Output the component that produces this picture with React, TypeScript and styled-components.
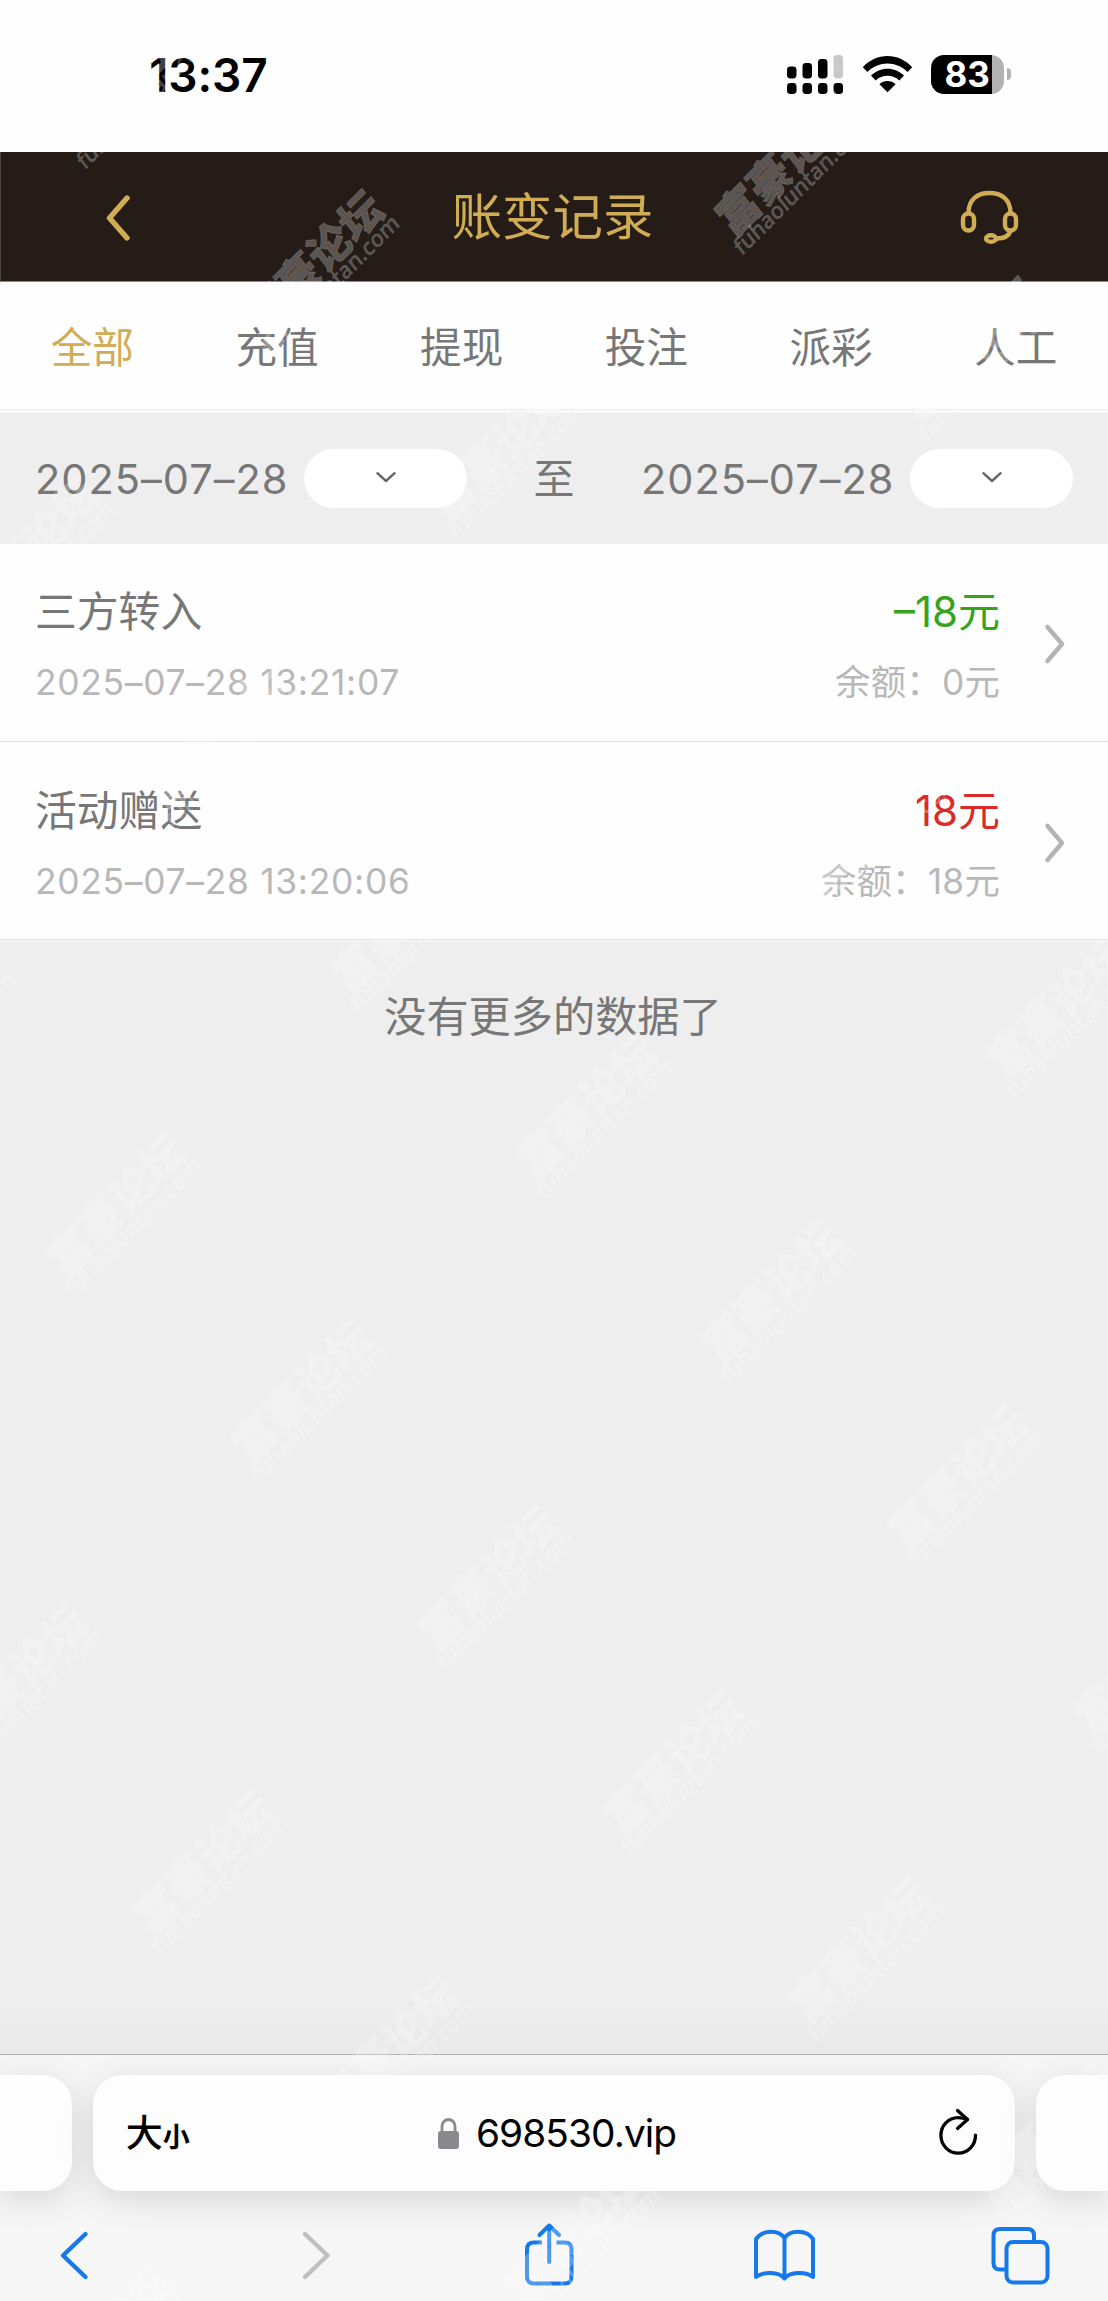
import React from "react";
import styled, { createGlobalStyle } from "styled-components";

const GOLD = "#d0ac55";
const BLUE = "#1579ea";
const GREY = "#777777";

const GlobalStyle = createGlobalStyle`
  html, body { margin: 0; padding: 0; background: #eeeeee; }
  *, *::before, *::after { box-sizing: border-box; }
  body { font-family: Inter, "Noto Sans CJK SC", sans-serif; }
`;

const Screen = styled.div`
  position: relative;
  width: 1108px;
  height: 2301px;
  overflow: hidden;
  display: flex;
  flex-direction: column;
  background: #eeeeee;
  color: ${GREY};
`;

/* ---------- status bar ---------- */
const StatusBar = styled.div`
  height: 152px;
  flex: none;
  display: flex;
  align-items: flex-start;
  justify-content: space-between;
  padding: 48px 97px 0 149px;
  background: #fefefe;
`;
const Clock = styled.div`
  margin-top: -1px;
  font-size: 46px;
  line-height: 56px;
  font-weight: 600;
  letter-spacing: -0.1px;
  color: #000;
`;
const StatusIcons = styled.div`
  display: flex;
  align-items: flex-start;
  padding-top: 7px;
`;
const SignalSvg = styled.svg`
  width: 57px;
  height: 40px;
  margin-right: 18px;
`;
const WifiSvg = styled.svg`
  width: 51px;
  height: 38px;
  margin-right: 18px;
`;
const Battery = styled.div`
  width: 73px;
  height: 39px;
  border-radius: 13px;
  background: linear-gradient(to right, #000 61px, #b2b2b2 61px);
  color: #fff;
  font-size: 35px;
  font-weight: 700;
  line-height: 39px;
  padding-left: 13.5px;
`;
const BatteryNub = styled.div`
  width: 4px;
  height: 12px;
  margin: 13px 0 0 3px;
  border-radius: 0 5px 5px 0;
  background: #b2b2b2;
`;

/* ---------- app header ---------- */
const Header = styled.header`
  height: 130px;
  flex: none;
  display: grid;
  grid-template-columns: 200px 1fr 200px;
  align-items: center;
  background: #251c18;
  border-bottom: 1px solid #8d8886;
  border-left: 1px solid #4d4643;
`;
const HeaderTitle = styled.h1`
  margin: 0;
  padding-right: 4px;
  text-align: center;
  font-size: 50.4px;
  line-height: 60px;
  font-weight: 400;
  color: ${GOLD};
`;
const BackSvg = styled.svg`
  width: 26px;
  height: 50px;
  margin-left: 103px;
  margin-top: 2px;
`;
const HeadsetSvg = styled.svg`
  width: 60px;
  height: 56px;
  margin-left: 52px;
`;

/* ---------- tabs ---------- */
const Tabs = styled.nav`
  height: 128px;
  flex: none;
  display: grid;
  grid-template-columns: repeat(6, 1fr);
  background: #fefefe;
  border-bottom: 1px solid #ededed;
`;
const Tab = styled.div<{ $active?: boolean }>`
  text-align: center;
  padding-top: 36px;
  font-size: 41.6px;
  line-height: 60px;
  color: ${(p) => (p.$active ? GOLD : GREY)};
`;
const TabsEdge = styled.div`
  height: 3px;
  flex: none;
  background: #f8f8f8;
`;

/* ---------- date range ---------- */
const DateBar = styled.div`
  height: 131px;
  flex: none;
  display: flex;
  align-items: center;
  justify-content: space-between;
  padding: 0 35px 0 35px;
`;
const DateGroup = styled.div`
  display: flex;
  align-items: center;
  justify-content: space-between;
  width: 432px;
`;
const DateText = styled.span`
  font-size: 41.5px;
  line-height: 60px;
  font-weight: 400;
  letter-spacing: 1px;
  white-space: nowrap;
`;
const DateJoin = styled.span`
  font-size: 41px;
  line-height: 60px;
`;
const Pill = styled.div`
  width: 163px;
  height: 59px;
  border-radius: 30px;
  background: #fff;
  display: flex;
  align-items: center;
  justify-content: center;
`;
const DownSvg = styled.svg`
  width: 24px;
  height: 16px;
  margin-bottom: 4px;
`;

/* ---------- records ---------- */
const Row = styled.div`
  height: 198px;
  flex: none;
  display: flex;
  align-items: flex-start;
  padding: 40px 42px 0 35px;
  background: #fefefe;
  border-bottom: 1px solid #e0e0e0;

  & + & {
    padding-top: 41px;
  }
`;
const Col = styled.div<{ $right?: boolean }>`
  display: flex;
  flex-direction: column;
  flex: ${(p) => (p.$right ? "none" : "1")};
  align-items: ${(p) => (p.$right ? "flex-end" : "flex-start")};
`;
const RowTitle = styled.div`
  font-size: 41.8px;
  line-height: 56px;
`;
const Amount = styled.div<{ $color: string }>`
  font-size: 42px;
  line-height: 56px;
  color: ${(p) => p.$color};
`;
const Sub = styled.div<{ $spacing?: number }>`
  margin-top: 18px;
  font-size: 35.4px;
  line-height: 50px;
  font-weight: 400;
  letter-spacing: ${(p) => p.$spacing ?? 0}px;
  color: #b8b8b8;
  white-space: nowrap;
`;
const RowSvg = styled.svg`
  width: 24px;
  height: 44px;
  margin: 38px 0 0 42px;
`;

const Feed = styled.div`
  flex: 1;
  display: flex;
  flex-direction: column;
  align-items: center;
  border-top: 2px solid #f3f3f3;
  background: linear-gradient(to bottom, #eeeeee calc(100% - 60px), #e9e9e9 100%);
`;
const EmptyText = styled.p`
  margin: 45px 0 0;
  font-size: 42.2px;
  line-height: 60px;
  padding-right: 2px;
`;

/* ---------- browser chrome ---------- */
const Browser = styled.footer`
  height: 247px;
  flex: none;
  border-top: 1px solid #b2b2b2;
  background: #f6f6f6;
  overflow: hidden;
`;
const AddressRow = styled.div`
  display: grid;
  grid-template-columns: 72px 922.5px 72px;
  column-gap: 20.8px;
  padding-top: 20px;
`;
const AddressCard = styled.div<{ $side?: "left" | "right" }>`
  height: 116px;
  border-radius: ${(p) =>
    p.$side === "left" ? "0 29px 29px 0" : p.$side === "right" ? "29px 0 0 29px" : "29px"};
  background: #fdfdfd;
  box-shadow: 0 8px 34px rgba(0, 0, 0, 0.13);
  display: flex;
  align-items: center;
  justify-content: space-between;
  padding: ${(p) => (p.$side ? "0" : "0 37px 0 33px")};
`;
const TextSize = styled.div`
  width: 110px;
  color: #000;
  font-family: "Noto Sans CJK SC", sans-serif;
  font-weight: 500;
  font-size: 37px;
  line-height: 50px;
`;
const SmallGlyph = styled.span`
  font-size: 27px;
  font-weight: 700;
`;
const Site = styled.div`
  display: flex;
  align-items: center;
  gap: 17px;
  padding-left: 10px;
  font-size: 38.8px;
  line-height: 50px;
  letter-spacing: -0.9px;
  color: #000;
`;
const LockSvg = styled.svg`
  width: 21px;
  height: 31px;
`;
const ReloadBox = styled.div`
  width: 110px;
  display: flex;
  justify-content: flex-end;
`;
const ReloadSvg = styled.svg`
  width: 40px;
  height: 50px;
  margin-bottom: 2px;
`;
const ToolSvg = styled.svg`
  display: block;
  width: 100%;
  height: 110px;
`;

/* ---------- watermark ---------- */
const WatermarkLayer = styled.div`
  position: absolute;
  inset: 0;
  overflow: hidden;
  pointer-events: none;
`;
const Mark = styled.div`
  position: absolute;
  width: 200px;
  height: 66px;
  margin: -33px 0 0 -100px;
  transform: rotate(-45deg) skewX(-7deg);
  color: rgba(255, 255, 255, 0.26);
  white-space: nowrap;
  text-align: center;
`;
const MarkName = styled.div`
  font-family: "Noto Sans CJK SC", sans-serif;
  font-weight: 900;
  font-size: 44px;
  line-height: 44px;
  -webkit-text-stroke: 0.8px rgba(255, 255, 255, 0.18);
`;
const MarkSite = styled.div`
  font-family: "Noto Sans", sans-serif;
  font-weight: 500;
  font-size: 22.4px;
  line-height: 24px;
  margin-top: -4.5px;
  -webkit-text-stroke: 0.5px rgba(255, 255, 255, 0.16);
`;

const marks: { x: number; y: number }[] = [];
for (let j = -4; j <= 4; j++) {
  for (let i = -12; i <= 14; i++) {
    const x = 121 + i * 185.8 - j * 99;
    const y = 1212 + i * 185.9 + j * 471.3;
    if (x > -78 && x < 1186 && y > 76 && y < 2378) marks.push({ x, y });
  }
}

const Signal = () => (
  <SignalSvg viewBox="0 0 57 40">
    <rect x="0" y="11.5" width="9.5" height="12" rx="3.4" />
    <rect x="15.5" y="8" width="9.5" height="15.5" rx="3.4" />
    <rect x="31" y="4" width="9.5" height="19.5" rx="3.4" />
    <rect x="46.5" y="0" width="9.5" height="23.5" rx="3.4" fill="#c9c9c9" />
    {[0, 15.5, 31, 46.5].map((x) => (
      <rect key={x} x={x} y="28" width="9.5" height="11" rx="3.4" />
    ))}
  </SignalSvg>
);

const Wifi = () => (
  <WifiSvg viewBox="0 0 51 38">
    <path d="M0.8 12.2C14.5 -2.8 36.5 -2.8 50.2 12.2L45.6 17C34.2 5.6 16.8 5.6 5.4 17Z" />
    <path d="M9 20.6C18.3 11.3 32.7 11.3 42 20.6L37.3 25.4C30.8 19.2 20.2 19.2 13.7 25.4Z" />
    <path d="M17.4 29.3C22 25 29 25 33.6 29.3L25.5 37.2Z" />
  </WifiSvg>
);

const Headset = () => (
  <HeadsetSvg viewBox="0 0 60 56" fill="none" stroke={GOLD} strokeWidth="4.4">
    <path d="M8.5 24C8.5 10.5 17.5 4 29.5 4S50.5 10.5 50.5 24" />
    <rect x="3" y="24.5" width="11" height="17" rx="5.5" />
    <rect x="45" y="24.5" width="11" height="17" rx="5.5" />
    <ellipse cx="31" cy="49.5" rx="5" ry="3.2" />
    <path d="M50.5 42C49 46.5 44 49.5 37 49.5" />
  </HeadsetSvg>
);

const DownPill = () => (
  <Pill>
    <DownSvg viewBox="0 0 24 16" fill="none" stroke="#666" strokeWidth="2.4" strokeLinecap="round" strokeLinejoin="round">
      <path d="M3.4 4.2L12 12L20.6 4.2" />
    </DownSvg>
  </Pill>
);

const Toolbar = () => (
  <ToolSvg viewBox="0 2191 1108 110" fill="none" stroke={BLUE} strokeWidth="4.4" strokeLinecap="round" strokeLinejoin="round">
    <path d="M85.5 2234L63 2255.5L85.5 2277" />
    <path d="M305 2234L327.5 2255.5L305 2277" stroke="#bfbfbf" />
    <g strokeWidth="4">
      <path strokeLinecap="butt" d="M542 2242.5H534Q527 2242.5 527 2249.5V2276.5Q527 2283.5 534 2283.5H564.5Q571.5 2283.5 571.5 2276.5V2249.5Q571.5 2242.5 564.5 2242.5H556.5" />
      <path d="M549.2 2262V2225.5M539.5 2235L549.2 2225.5L559 2235" />
      <path d="M784.5 2238C779 2230 763 2229 756 2239V2277C763 2271.5 779 2271.5 784.5 2278.5C790 2271.5 806 2271.5 813 2277V2239C806 2229 790 2230 784.5 2238V2278" />
      <path d="M1004 2269.5H1000Q993.5 2269.5 993.5 2263V2235.5Q993.5 2229 1000 2229H1027.5Q1034 2229 1034 2235.5V2240" />
      <rect x="1006.5" y="2242" width="41" height="40.5" rx="6.5" />
    </g>
  </ToolSvg>
);

const records = [
  { title: "三方转入", time: "2025–07–28 13:21:07", amount: "–18元", balance: "余额：0元", color: "#36a31c" },
  { title: "活动赠送", time: "2025–07–28 13:20:06", amount: "18元", balance: "余额：18元", color: "#dc2a2b" },
];

export default function App() {
  return (
    <Screen>
      <GlobalStyle />
      <StatusBar>
        <Clock>13:37</Clock>
        <StatusIcons>
          <Signal />
          <Wifi />
          <Battery>83</Battery>
          <BatteryNub />
        </StatusIcons>
      </StatusBar>
      <Header>
        <BackSvg viewBox="0 0 26 50" fill="none" stroke={GOLD} strokeWidth="5.4" strokeLinecap="round" strokeLinejoin="round">
          <path d="M23 5L5.5 25L23 45" />
        </BackSvg>
        <HeaderTitle>账变记录</HeaderTitle>
        <Headset />
      </Header>
      <Tabs>
        {["全部", "充值", "提现", "投注", "派彩", "人工"].map((t, i) => (
          <Tab key={t} $active={i === 0}>{t}</Tab>
        ))}
      </Tabs>
      <TabsEdge />
      <DateBar>
        <DateGroup>
          <DateText>2025–07–28</DateText>
          <DownPill />
        </DateGroup>
        <DateJoin>至</DateJoin>
        <DateGroup>
          <DateText>2025–07–28</DateText>
          <DownPill />
        </DateGroup>
      </DateBar>
      {records.map((r) => (
        <Row key={r.title}>
          <Col>
            <RowTitle>{r.title}</RowTitle>
            <Sub $spacing={0.7}>{r.time}</Sub>
          </Col>
          <Col $right>
            <Amount $color={r.color}>{r.amount}</Amount>
            <Sub $spacing={0.2}>{r.balance}</Sub>
          </Col>
          <RowSvg viewBox="0 0 24 44" fill="none" stroke="#b4b4b4" strokeWidth="4.5" strokeLinecap="round" strokeLinejoin="round">
            <path d="M5.5 5L20 22L5.5 39" />
          </RowSvg>
        </Row>
      ))}
      <Feed>
        <EmptyText>没有更多的数据了</EmptyText>
      </Feed>
      <Browser>
        <AddressRow>
          <AddressCard $side="left" />
          <AddressCard>
            <TextSize>大<SmallGlyph>小</SmallGlyph></TextSize>
            <Site>
              <LockSvg viewBox="0 0 21 31">
                <rect x="0" y="13" width="21" height="18" rx="3" fill="#8a8a8e" />
                <path d="M4 14V8.5a6.5 7 0 0 1 13 0V14" fill="none" stroke="#8a8a8e" strokeWidth="2.8" />
              </LockSvg>
              698530.vip
            </Site>
            <ReloadBox>
              <ReloadSvg viewBox="0 0 40 50" fill="none" stroke="#000" strokeWidth="3.3" strokeLinecap="round" strokeLinejoin="round">
                <path d="M29.5 12.5C26.5 11 23.5 10.6 20 10.6A17.3 17.8 0 1 0 37.5 28.2" />
                <path d="M19.5 3.5L29.5 12.5L19.5 21.5" />
              </ReloadSvg>
            </ReloadBox>
          </AddressCard>
          <AddressCard $side="right" />
        </AddressRow>
        <Toolbar />
      </Browser>
      <WatermarkLayer>
        {marks.map((m) => (
          <Mark key={`${m.x}-${m.y}`} style={{ left: m.x, top: m.y }}>
            <MarkName>富豪论坛</MarkName>
            <MarkSite>fuhaoluntan.com</MarkSite>
          </Mark>
        ))}
      </WatermarkLayer>
    </Screen>
  );
}
